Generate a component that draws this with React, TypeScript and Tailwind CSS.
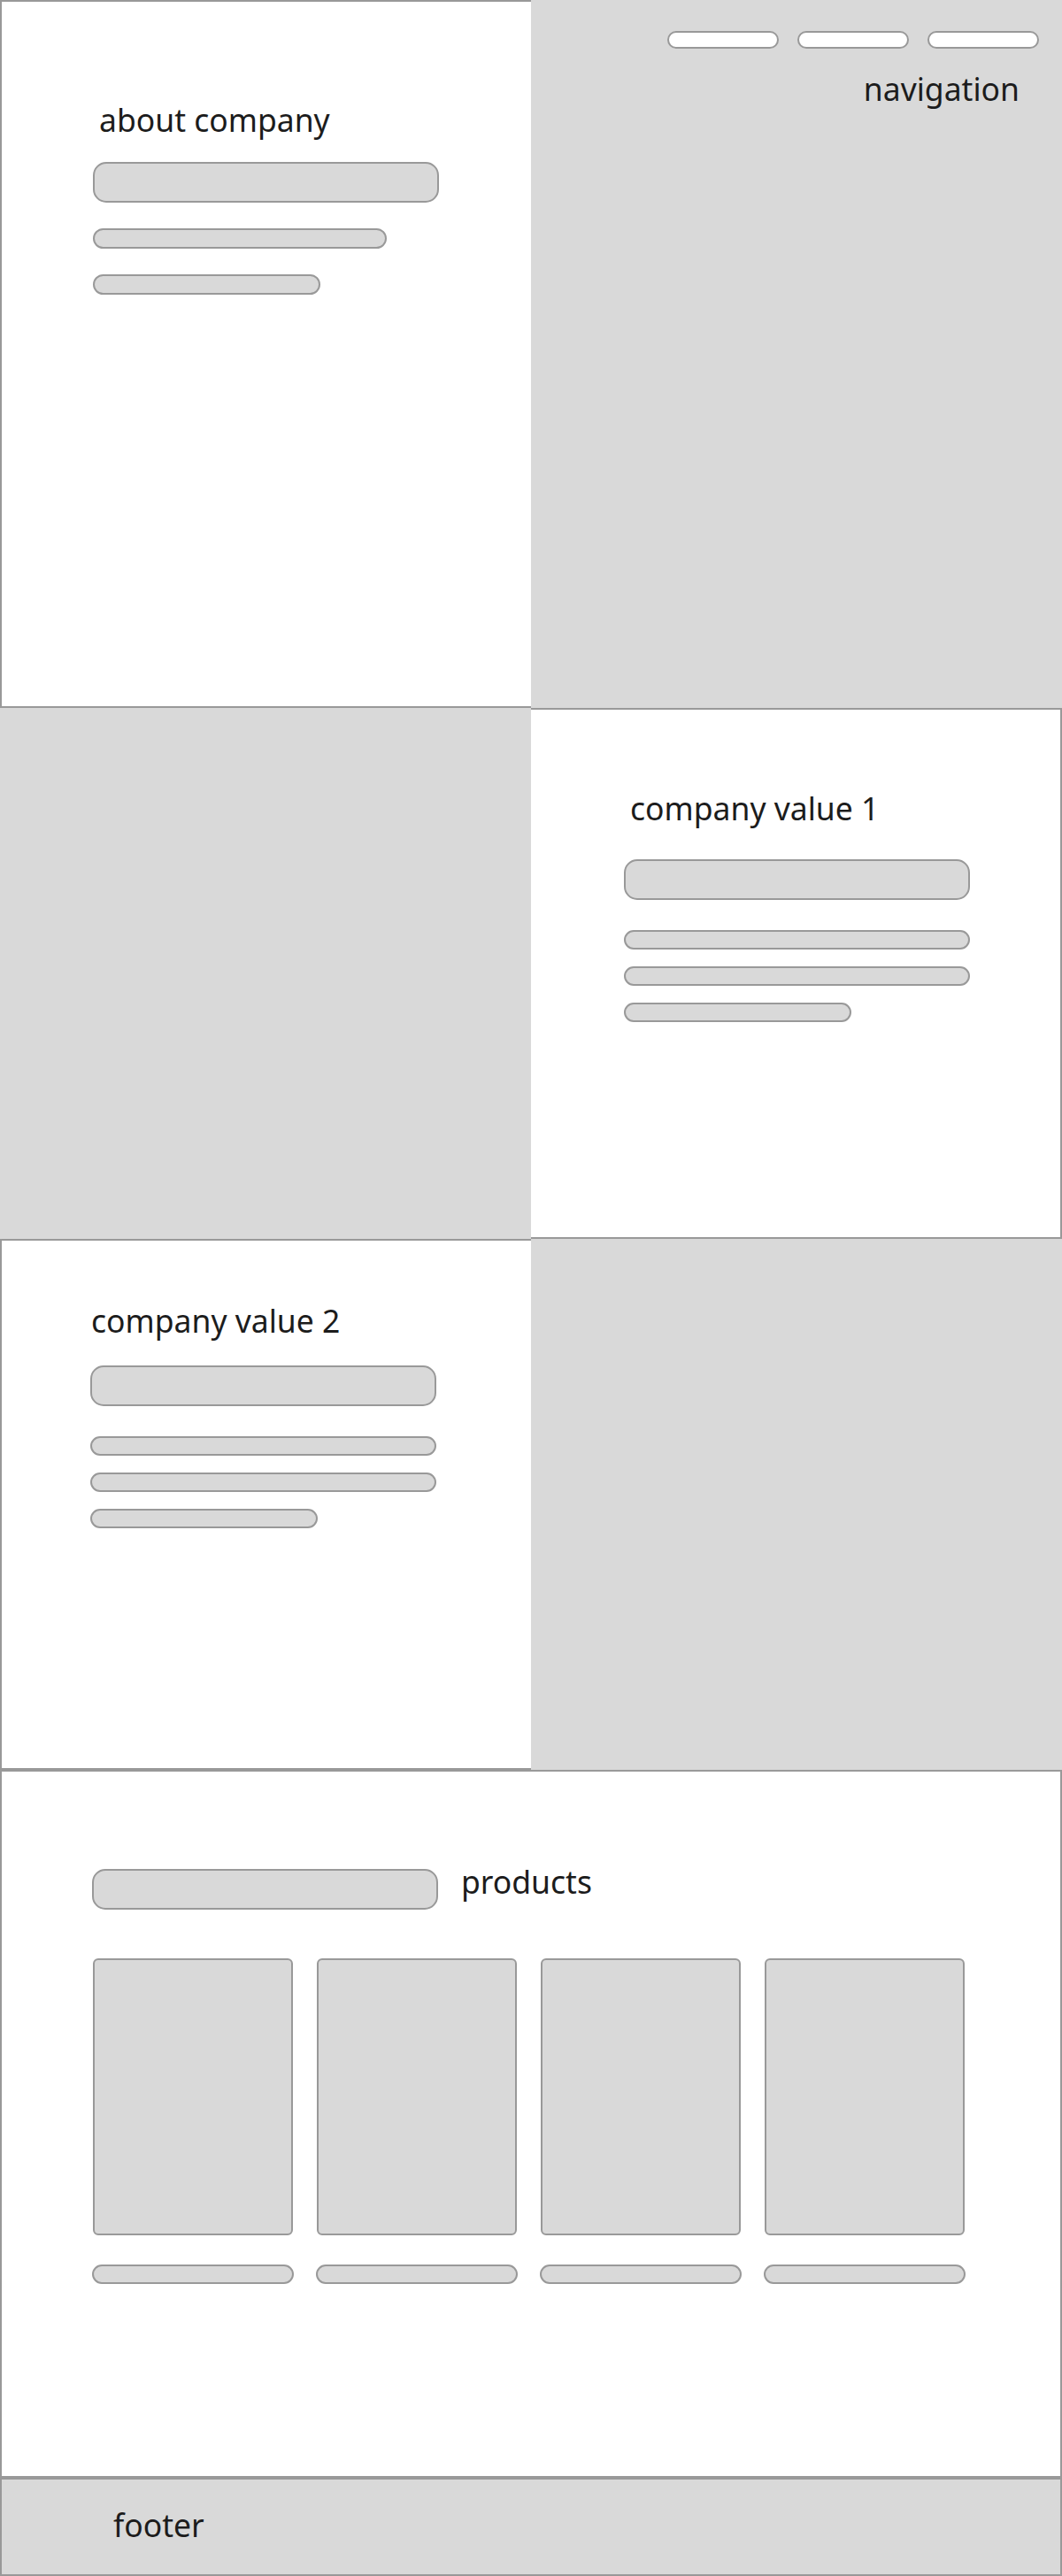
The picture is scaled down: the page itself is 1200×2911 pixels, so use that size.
const FONT = "font-['Noto_Sans','Open_Sans',sans-serif]";

function Heading({ text, className = "" }: { text: string; className?: string }) {
  return <h2 className={`text-[35.5px] leading-[36px] font-normal text-[#1c1c1c] ${className}`}>{text}</h2>;
}

function BigBar({ className = "" }: { className?: string }) {
  return <div className={`h-[46px] w-[391px] rounded-[15px] border-2 border-[#999999] bg-[#d9d9d9] ${className}`} />;
}

function Line({ width, height = 22, className = "" }: { width: number; height?: number; className?: string }) {
  return (
    <div
      className={`rounded-full border-2 border-[#999999] bg-[#d9d9d9] ${className}`}
      style={{ width, height }}
    />
  );
}

function NavPill() {
  return <div className="h-[20px] w-[126px] rounded-full border-2 border-[#999999] bg-white" />;
}

function ProductCard() {
  return (
    <div className="flex flex-col">
      <div className="mx-auto h-[313px] w-[226px] rounded-[6px] border-2 border-[#999999] bg-[#d9d9d9]" />
      <div className="mt-[33px] h-[22px] w-full rounded-full border-2 border-[#999999] bg-[#d9d9d9]" />
    </div>
  );
}

export default function App() {
  return (
    <div className={`w-[1200px] bg-white ${FONT}`}>
      {/* about + navigation */}
      <section className="grid h-[800px] grid-cols-2">
        <div className="border-y-2 border-l-2 border-[#999999] bg-white pl-[103px] pt-[115px]">
          <Heading text="about company" className="ml-[7px]" />
          <BigBar className="mt-[30px]" />
          <Line width={332} height={23} className="mt-[29px]" />
          <Line width={257} height={23} className="mt-[29px]" />
        </div>
        <div className="flex flex-col items-end bg-[#d9d9d9] pr-[26px] pt-[35px]">
          <nav className="flex gap-[21px]">
            <NavPill />
            <NavPill />
            <NavPill />
          </nav>
          <Heading text="navigation" className="mr-[22px] mt-[27px]" />
        </div>
      </section>

      {/* company value 1 */}
      <section className="grid h-[600px] grid-cols-2">
        <div className="bg-[#d9d9d9]" />
        <div className="border-y-2 border-r-2 border-[#999999] bg-white pl-[105px] pt-[93px]">
          <Heading text="company value 1" className="ml-[7px]" />
          <BigBar className="mt-[40px]" />
          <Line width={391} className="mt-[34px]" />
          <Line width={391} className="mt-[19px]" />
          <Line width={257} className="mt-[19px]" />
        </div>
      </section>

      {/* company value 2 */}
      <section className="grid h-[600px] grid-cols-2">
        <div className="border-y-2 border-l-2 border-[#999999] bg-white pl-[100px] pt-[72px]">
          <Heading text="company value 2" className="ml-[1px]" />
          <BigBar className="mt-[33px]" />
          <Line width={391} className="mt-[34px]" />
          <Line width={391} className="mt-[19px]" />
          <Line width={257} className="mt-[19px]" />
        </div>
        <div className="bg-[#d9d9d9]" />
      </section>

      {/* products */}
      <section className="h-[800px] border-2 border-[#999999] bg-white pl-[102px] pt-[110px]">
        <div className="flex items-start">
          <BigBar className="w-[390px]" />
          <Heading text="products" className="-mt-[4px] ml-[26px]" />
        </div>
        <div className="mt-[55px] grid grid-cols-[repeat(4,228px)] gap-x-[25px]">
          <ProductCard />
          <ProductCard />
          <ProductCard />
          <ProductCard />
        </div>
      </section>

      {/* footer */}
      <footer className="h-[111px] border-2 border-[#999999] bg-[#d9d9d9] pl-[126px] pt-[33px]">
        <Heading text="footer" />
      </footer>
    </div>
  );
}
